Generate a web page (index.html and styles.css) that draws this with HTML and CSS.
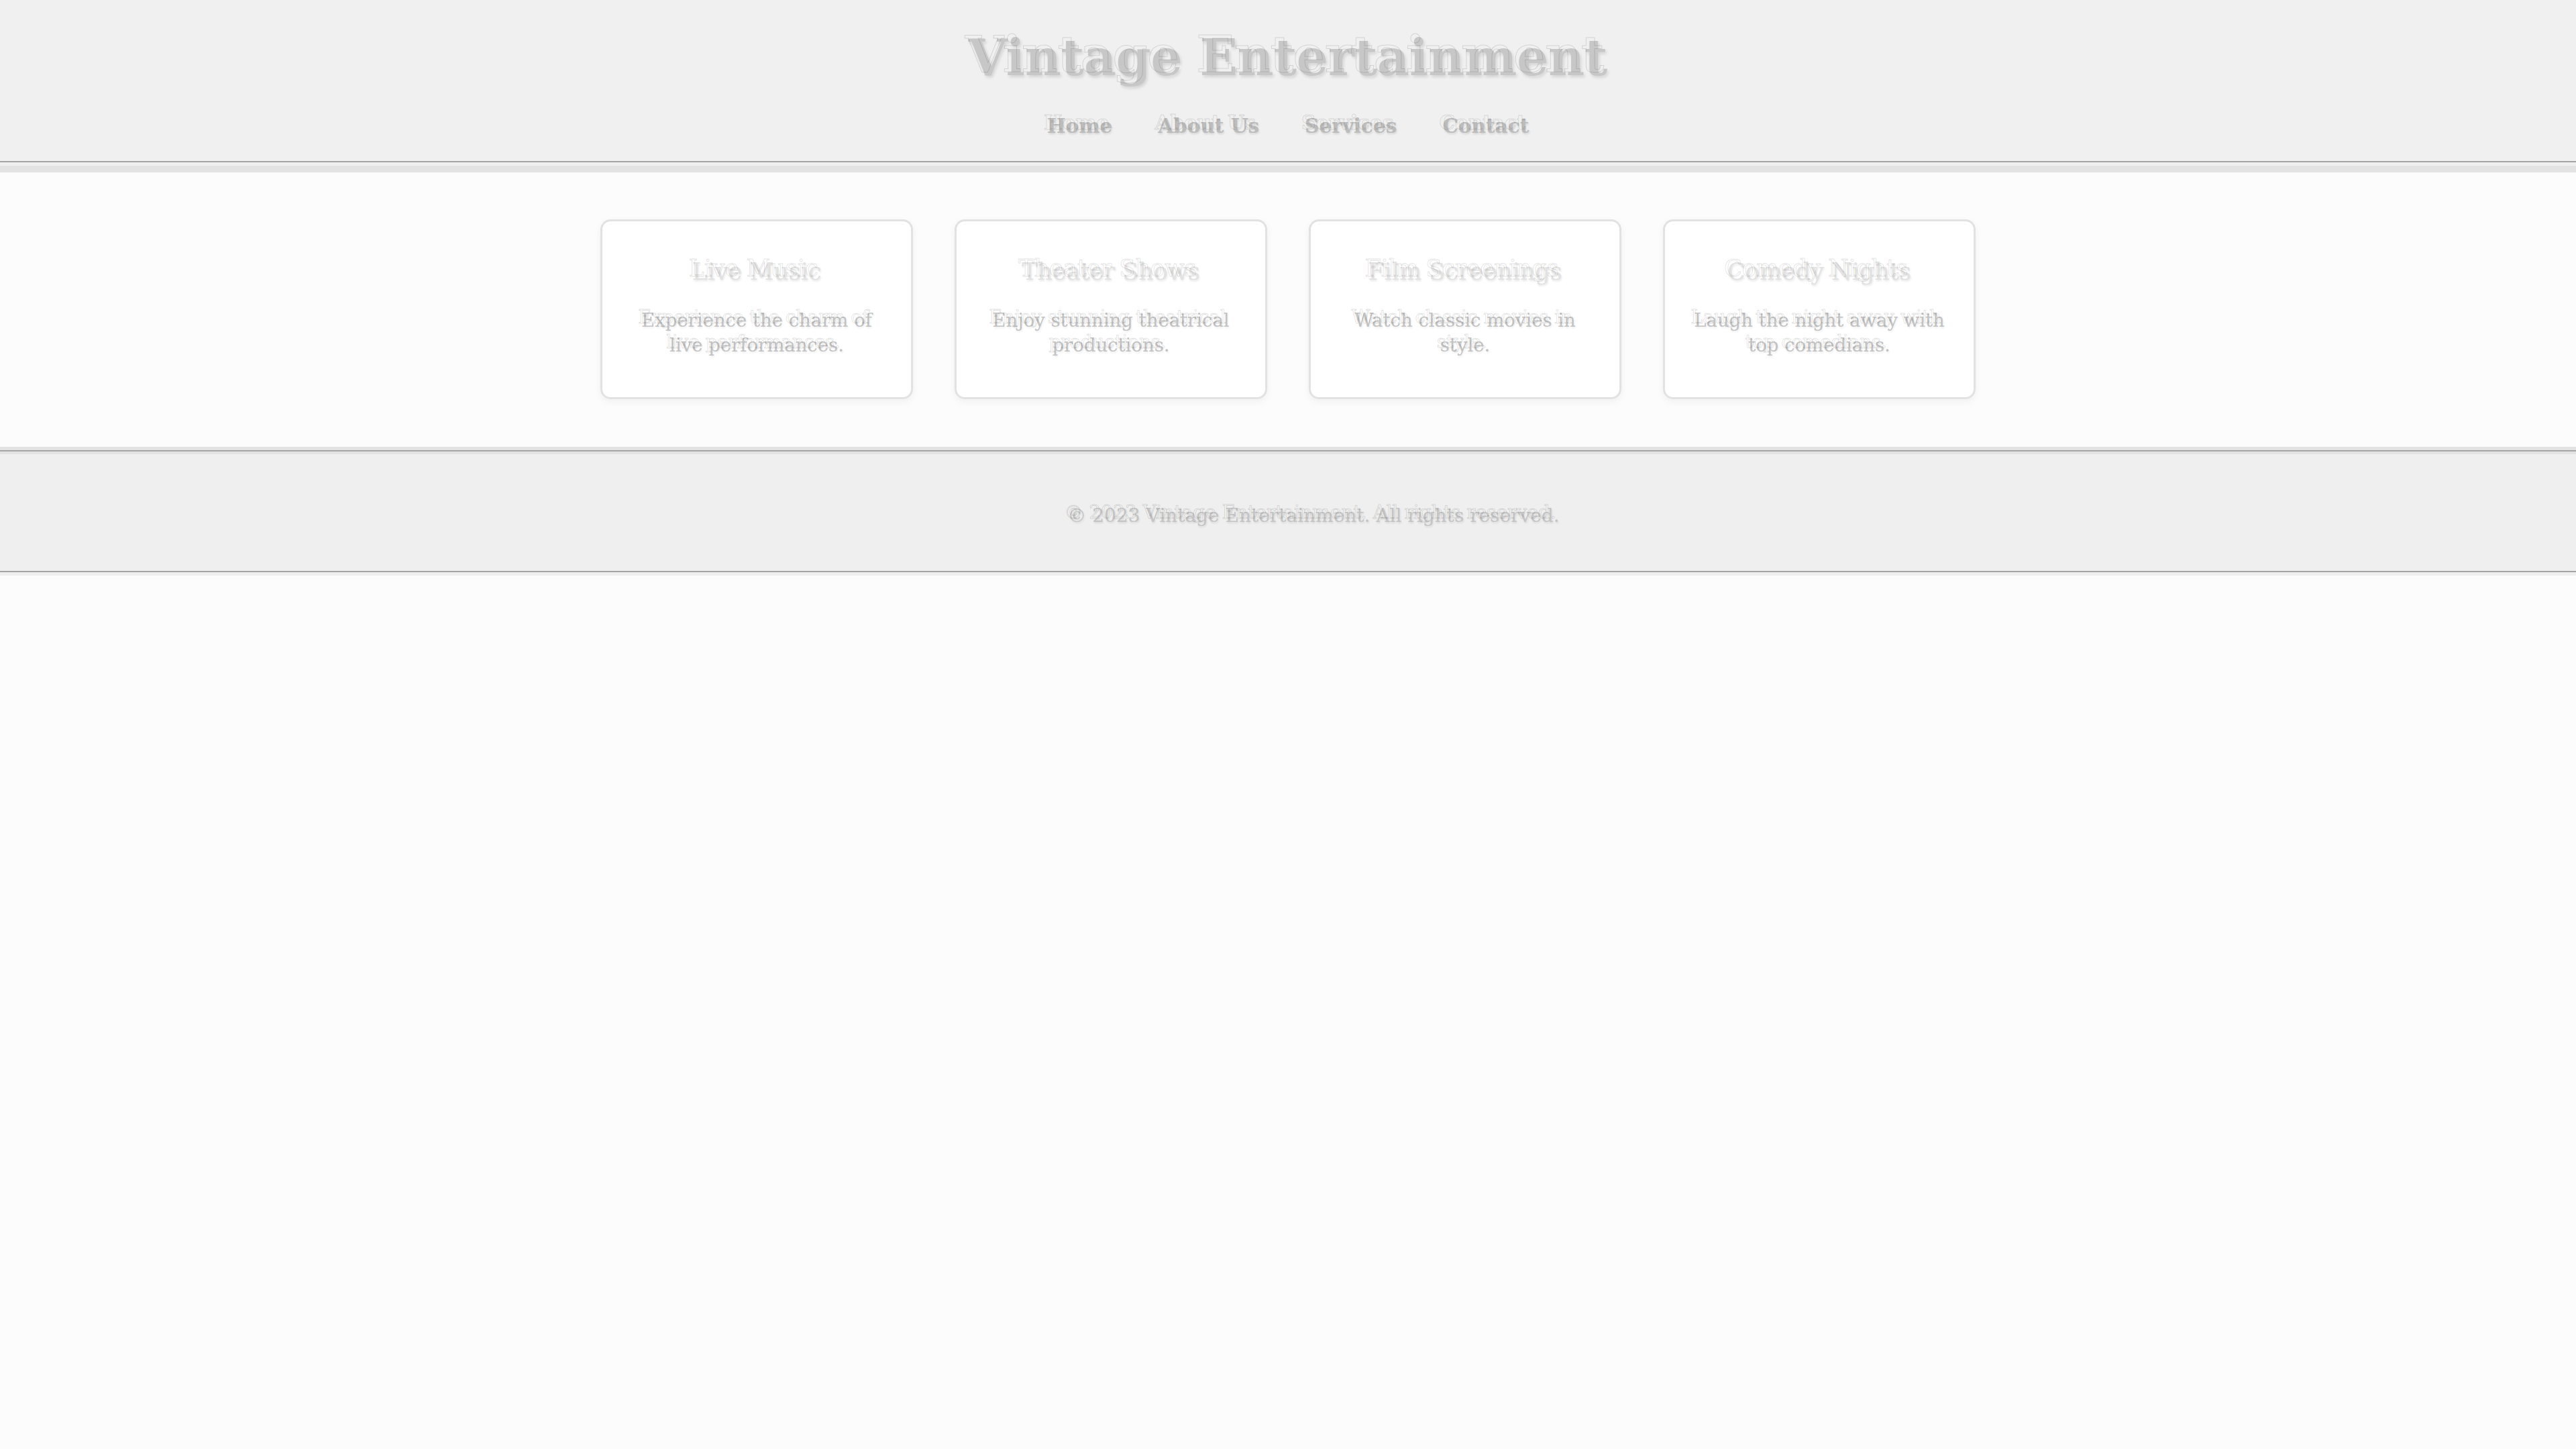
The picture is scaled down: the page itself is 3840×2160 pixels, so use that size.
FILE: index.html
```html
<!DOCTYPE html>
<html lang="en">
<head>
<meta charset="utf-8">
<title>Vintage Entertainment</title>
<link rel="stylesheet" href="styles.css">
</head>
<body>
<header class="site-header">
  <h1 class="site-title ghost" data-text="Vintage Entertainment">Vintage Entertainment</h1>
  <nav class="site-nav">
    <a class="nav-link ghost" href="#" data-text="Home">Home</a>
    <a class="nav-link ghost" href="#" data-text="About Us">About Us</a>
    <a class="nav-link ghost" href="#" data-text="Services">Services</a>
    <a class="nav-link ghost" href="#" data-text="Contact">Contact</a>
  </nav>
</header>
<main class="services">
  <div class="card">
    <h3 class="card-title ghost" data-text="Live Music">Live Music</h3>
    <p class="card-text ghost" data-text="Experience the charm of live performances.">Experience the charm of live performances.</p>
  </div>
  <div class="card">
    <h3 class="card-title ghost" data-text="Theater Shows">Theater Shows</h3>
    <p class="card-text ghost" data-text="Enjoy stunning theatrical productions.">Enjoy stunning theatrical productions.</p>
  </div>
  <div class="card">
    <h3 class="card-title ghost" data-text="Film Screenings">Film Screenings</h3>
    <p class="card-text ghost" data-text="Watch classic movies in style.">Watch classic movies in style.</p>
  </div>
  <div class="card">
    <h3 class="card-title ghost" data-text="Comedy Nights">Comedy Nights</h3>
    <p class="card-text ghost" data-text="Laugh the night away with top comedians.">Laugh the night away with top comedians.</p>
  </div>
</main>
<footer class="site-footer">
  <p class="footer-text ghost" data-text="© 2023 Vintage Entertainment. All rights reserved.">© 2023 Vintage Entertainment. All rights reserved.</p>
</footer>
</body>
</html>
```

FILE: styles.css
```css
html, body {
  margin: 0;
  padding: 0;
}

body {
  background: #fcfcfc;
  font-family: "DejaVu Serif", "Liberation Serif", serif;
  color: #c2c2c2;
  min-height: 2160px;
}

.ghost {
  position: relative;
}

.ghost::before {
  content: attr(data-text);
  position: absolute;
  left: -5px;
  top: -5px;
  width: 100%;
  color: transparent;
  -webkit-text-stroke: 1px rgba(0, 0, 0, 0.12);
  text-shadow: none;
  pointer-events: none;
}

.site-header {
  background: #f0f0f0;
  text-align: center;
  padding: 43px 0 34px;
  border-bottom: 2px solid #a4a4a4;
  box-shadow: 0 5px 0 #f0f0f0, 0 15px 0 #e3e3e3;
}

.site-title {
  margin: 0;
  font-size: 74px;
  line-height: 86px;
  font-weight: bold;
  color: #c7c7c7;
  text-shadow: 2px 3px 4px rgba(0, 0, 0, 0.12);
}

.site-nav {
  margin-top: 41px;
  display: flex;
  justify-content: center;
  gap: 68px;
  line-height: 36px;
}

.nav-link {
  font-size: 29.5px;
  font-weight: bold;
  color: #bcbcbc;
  text-decoration: none;
  text-shadow: 1px 2px 3px rgba(0, 0, 0, 0.12);
}

.services {
  display: flex;
  justify-content: center;
  gap: 62px;
  padding: 85px 0 76px;
}

.card {
  box-sizing: border-box;
  width: 466px;
  height: 268px;
  background: #ffffff;
  border: 3px solid #e2e2e2;
  border-radius: 15px;
  box-shadow: 0 4px 12px rgba(0, 0, 0, 0.05);
  padding: 53px 38px 0;
  text-align: center;
}

.card-title {
  margin: 0;
  font-size: 35px;
  line-height: 44px;
  font-weight: normal;
  color: #e2e2e2;
  text-shadow: 1px 2px 3px rgba(0, 0, 0, 0.1);
}

.card-text {
  margin: 32px 0 0;
  font-size: 27.5px;
  line-height: 37px;
  color: #c2c2c2;
  text-shadow: 1px 2px 3px rgba(0, 0, 0, 0.08);
}

.site-footer {
  background: #efefef;
  border-top: 2px solid #a4a4a4;
  border-bottom: 2px solid #a4a4a4;
  box-shadow: 0 -5px 0 #e3e3e3, 0 5px 0 #efefef, inset 0 4px 0 #e3e3e3;
  text-align: center;
  padding: 78px 0 64px 76px;
}

.footer-text {
  margin: 0;
  font-size: 28px;
  line-height: 36px;
  color: #c4c4c4;
  text-shadow: 1px 2px 3px rgba(0, 0, 0, 0.1);
}
```
